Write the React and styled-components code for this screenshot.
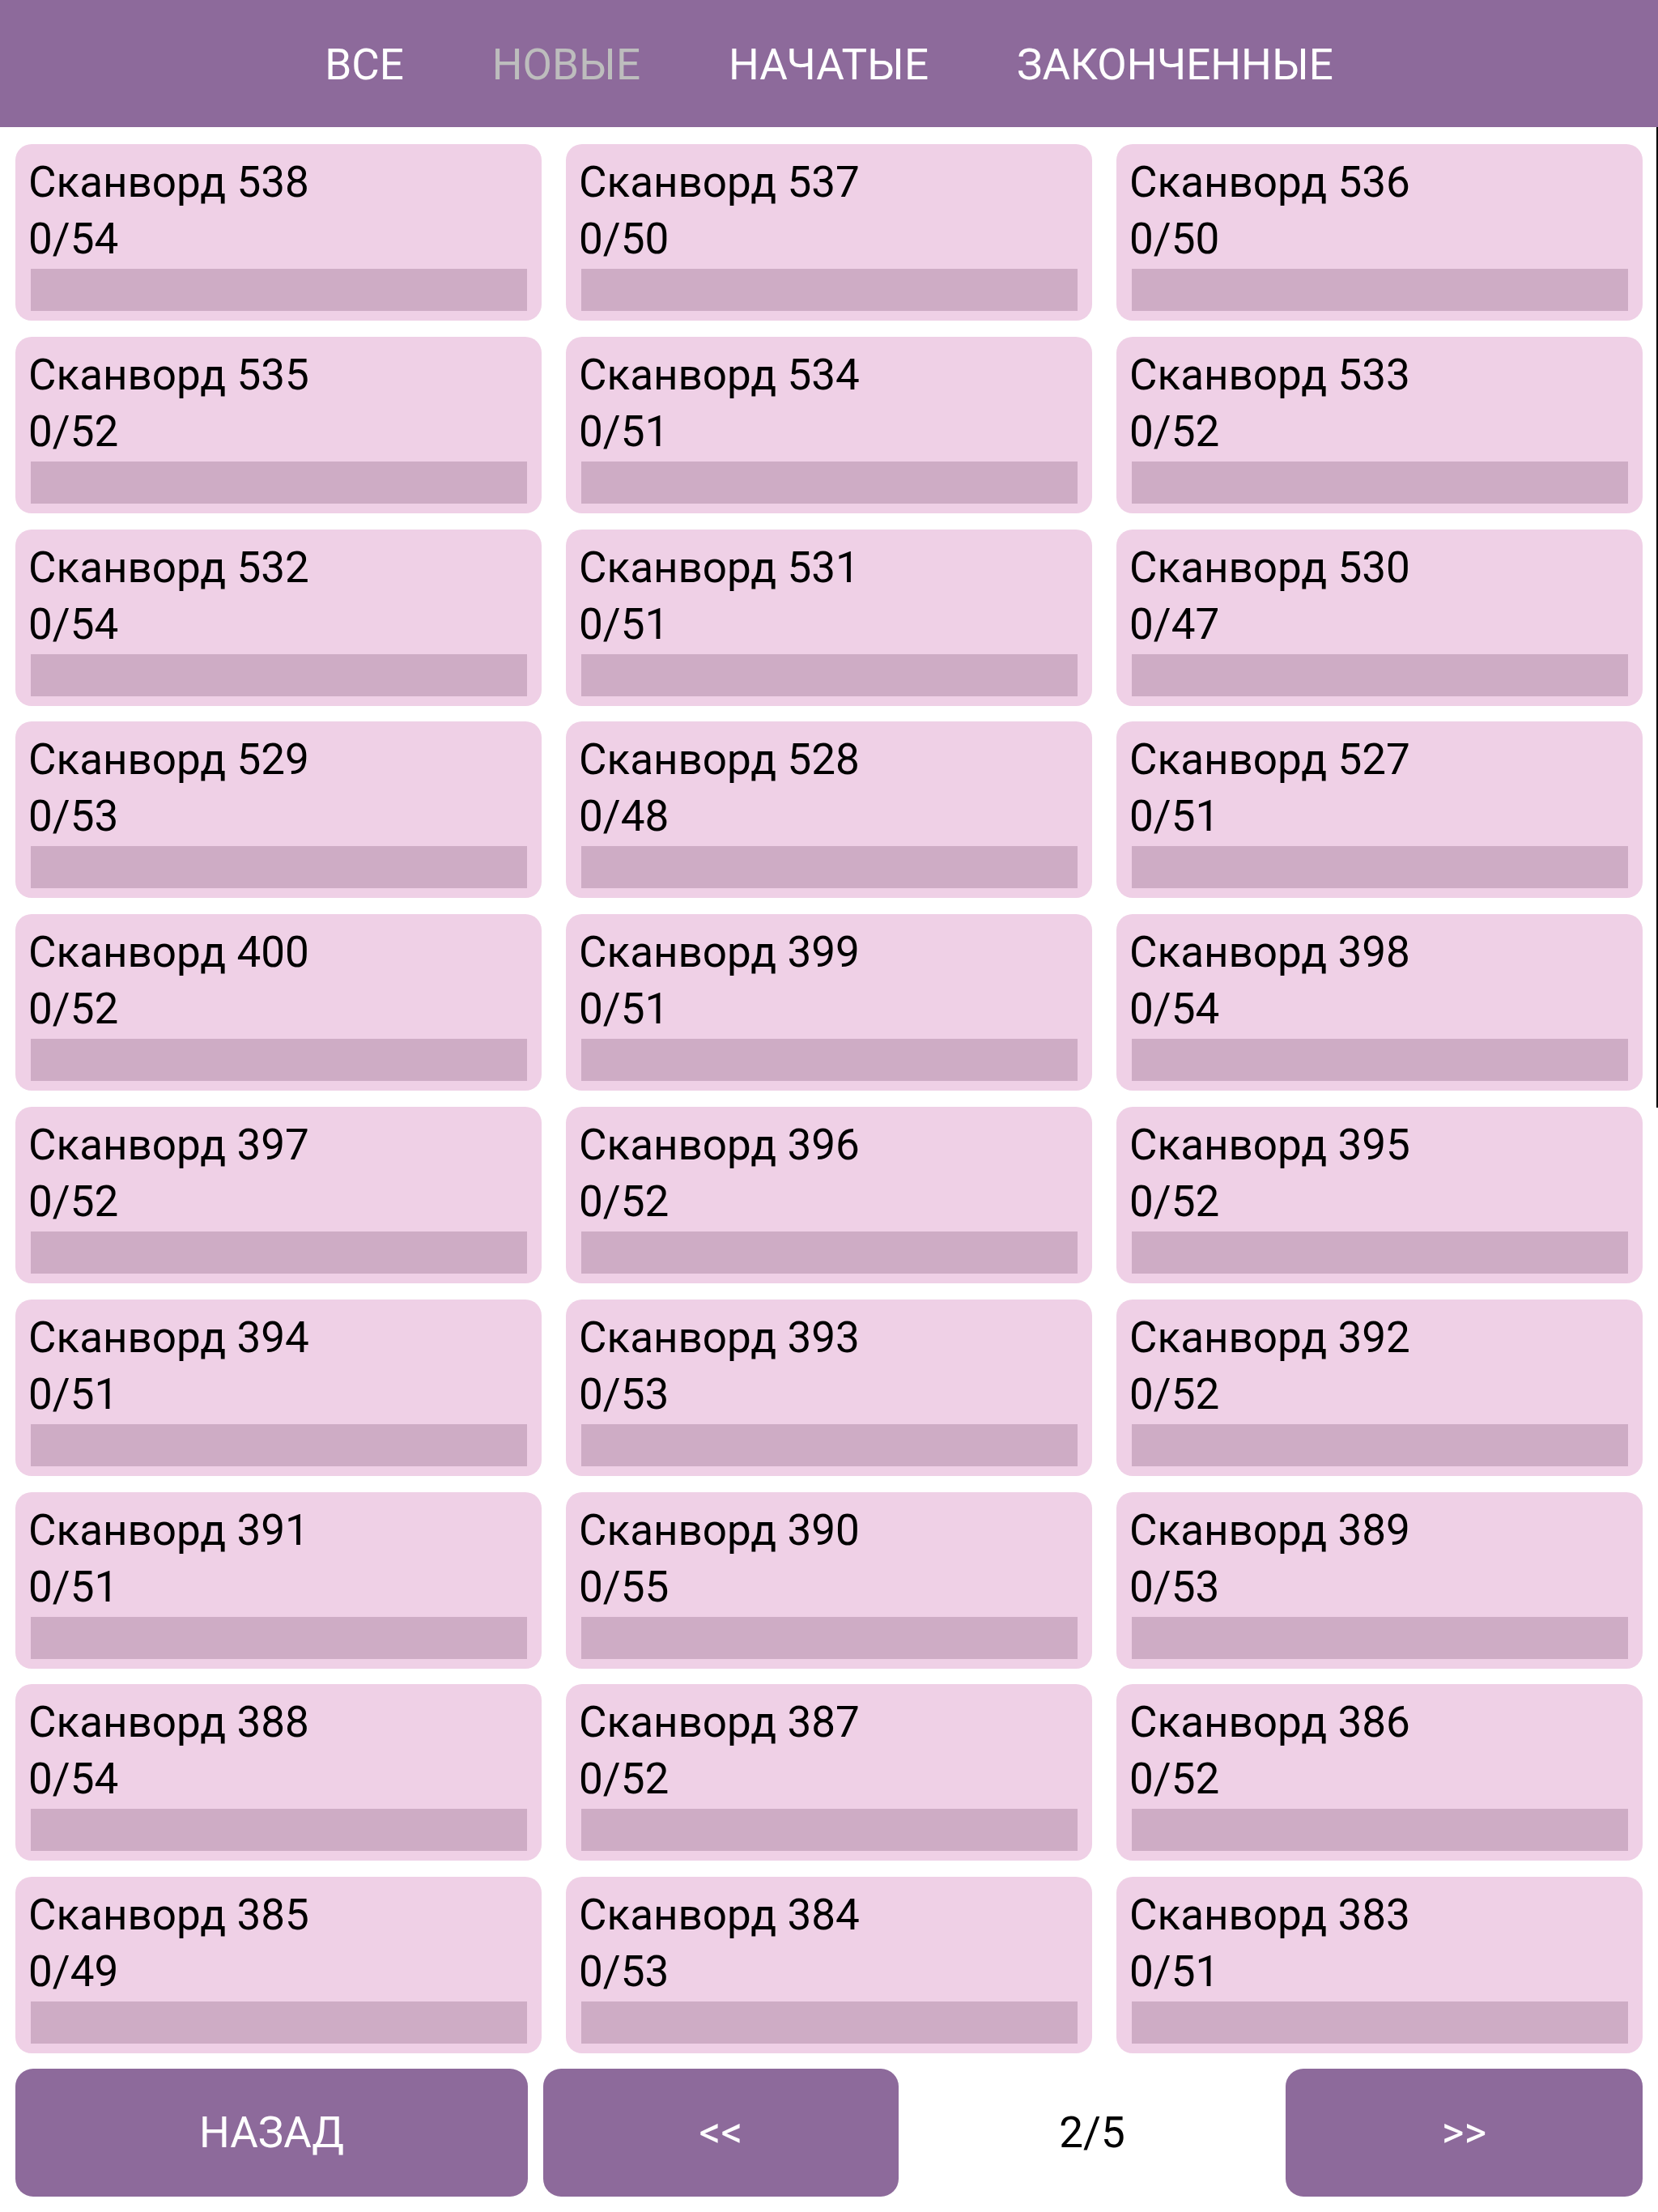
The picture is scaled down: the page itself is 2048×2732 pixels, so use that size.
import React from "react";
import styled, { createGlobalStyle } from "styled-components";

const Global = createGlobalStyle`
  html, body { margin: 0; padding: 0; background: #ffffff; }
  body { font-family: Roboto, "Noto Sans", "Liberation Sans", sans-serif; }
  * { box-sizing: border-box; }
`;

const Page = styled.div`
  position: relative;
  width: 2048px;
  height: 2732px;
  display: flex;
  flex-direction: column;
  overflow: hidden;
  background: #ffffff;
`;

const Header = styled.header`
  height: 157px;
  flex: none;
  background: #8d6a9b;
  display: flex;
  align-items: center;
  justify-content: center;
  gap: 109px;
  padding-top: 2px;
`;

const Tab = styled.div`
  font-size: 53px;
  line-height: 60px;
  color: ${(p) => (p.$active ? "#bdbdbd" : "#ffffff")};
  text-transform: uppercase;
  white-space: nowrap;
`;

const Grid = styled.div`
  display: grid;
  grid-template-columns: repeat(3, 650px);
  grid-auto-rows: 218px;
  column-gap: 30px;
  row-gap: 19.8px;
  padding: 21px 0 0 19px;
`;

const Card = styled.div`
  background: #efd0e6;
  border-radius: 20px;
  padding: 12px 18px 12px 19px;
  display: flex;
  flex-direction: column;
`;

const Line = styled.div`
  font-size: 53px;
  line-height: 70px;
  color: #000000;
  margin-left: -3px;
  white-space: nowrap;
`;

const Bar = styled.div`
  margin-top: 2px;
  height: 52px;
  background: #ceacc5;
`;

const Footer = styled.div`
  display: grid;
  grid-template-columns: 633px 439px 1fr 441px;
  column-gap: 19px;
  padding: 19px;
  height: 196px;
  flex: none;
  margin-top: auto;
`;

const NavButton = styled.button`
  border: none;
  border-radius: 22px;
  background: #8d6a9b;
  color: #ffffff;
  font-family: Roboto, "Noto Sans", "Liberation Sans", sans-serif;
  font-size: 53px;
  display: flex;
  align-items: center;
  justify-content: center;
  padding: 0;
`;

const PageNum = styled.div`
  display: flex;
  align-items: center;
  justify-content: center;
  font-size: 53px;
  color: #000000;
`;

const Scroll = styled.div`
  position: absolute;
  right: 0;
  top: 157px;
  width: 2px;
  height: 1211px;
  background: #000000;
`;

const items = [
  [538, 54], [537, 50], [536, 50],
  [535, 52], [534, 51], [533, 52],
  [532, 54], [531, 51], [530, 47],
  [529, 53], [528, 48], [527, 51],
  [400, 52], [399, 51], [398, 54],
  [397, 52], [396, 52], [395, 52],
  [394, 51], [393, 53], [392, 52],
  [391, 51], [390, 55], [389, 53],
  [388, 54], [387, 52], [386, 52],
  [385, 49], [384, 53], [383, 51],
];

export default function App() {
  return (
    <Page>
      <Global />
      <Header>
        <Tab>ВСЕ</Tab>
        <Tab $active>НОВЫЕ</Tab>
        <Tab>НАЧАТЫЕ</Tab>
        <Tab>ЗАКОНЧЕННЫЕ</Tab>
      </Header>
      <Grid>
        {items.map(([n, total]) => (
          <Card key={n}>
            <Line>Сканворд {n}</Line>
            <Line>0/{total}</Line>
            <Bar />
          </Card>
        ))}
      </Grid>
      <Footer>
        <NavButton>НАЗАД</NavButton>
        <NavButton>&lt;&lt;</NavButton>
        <PageNum>2/5</PageNum>
        <NavButton>&gt;&gt;</NavButton>
      </Footer>
      <Scroll />
    </Page>
  );
}
